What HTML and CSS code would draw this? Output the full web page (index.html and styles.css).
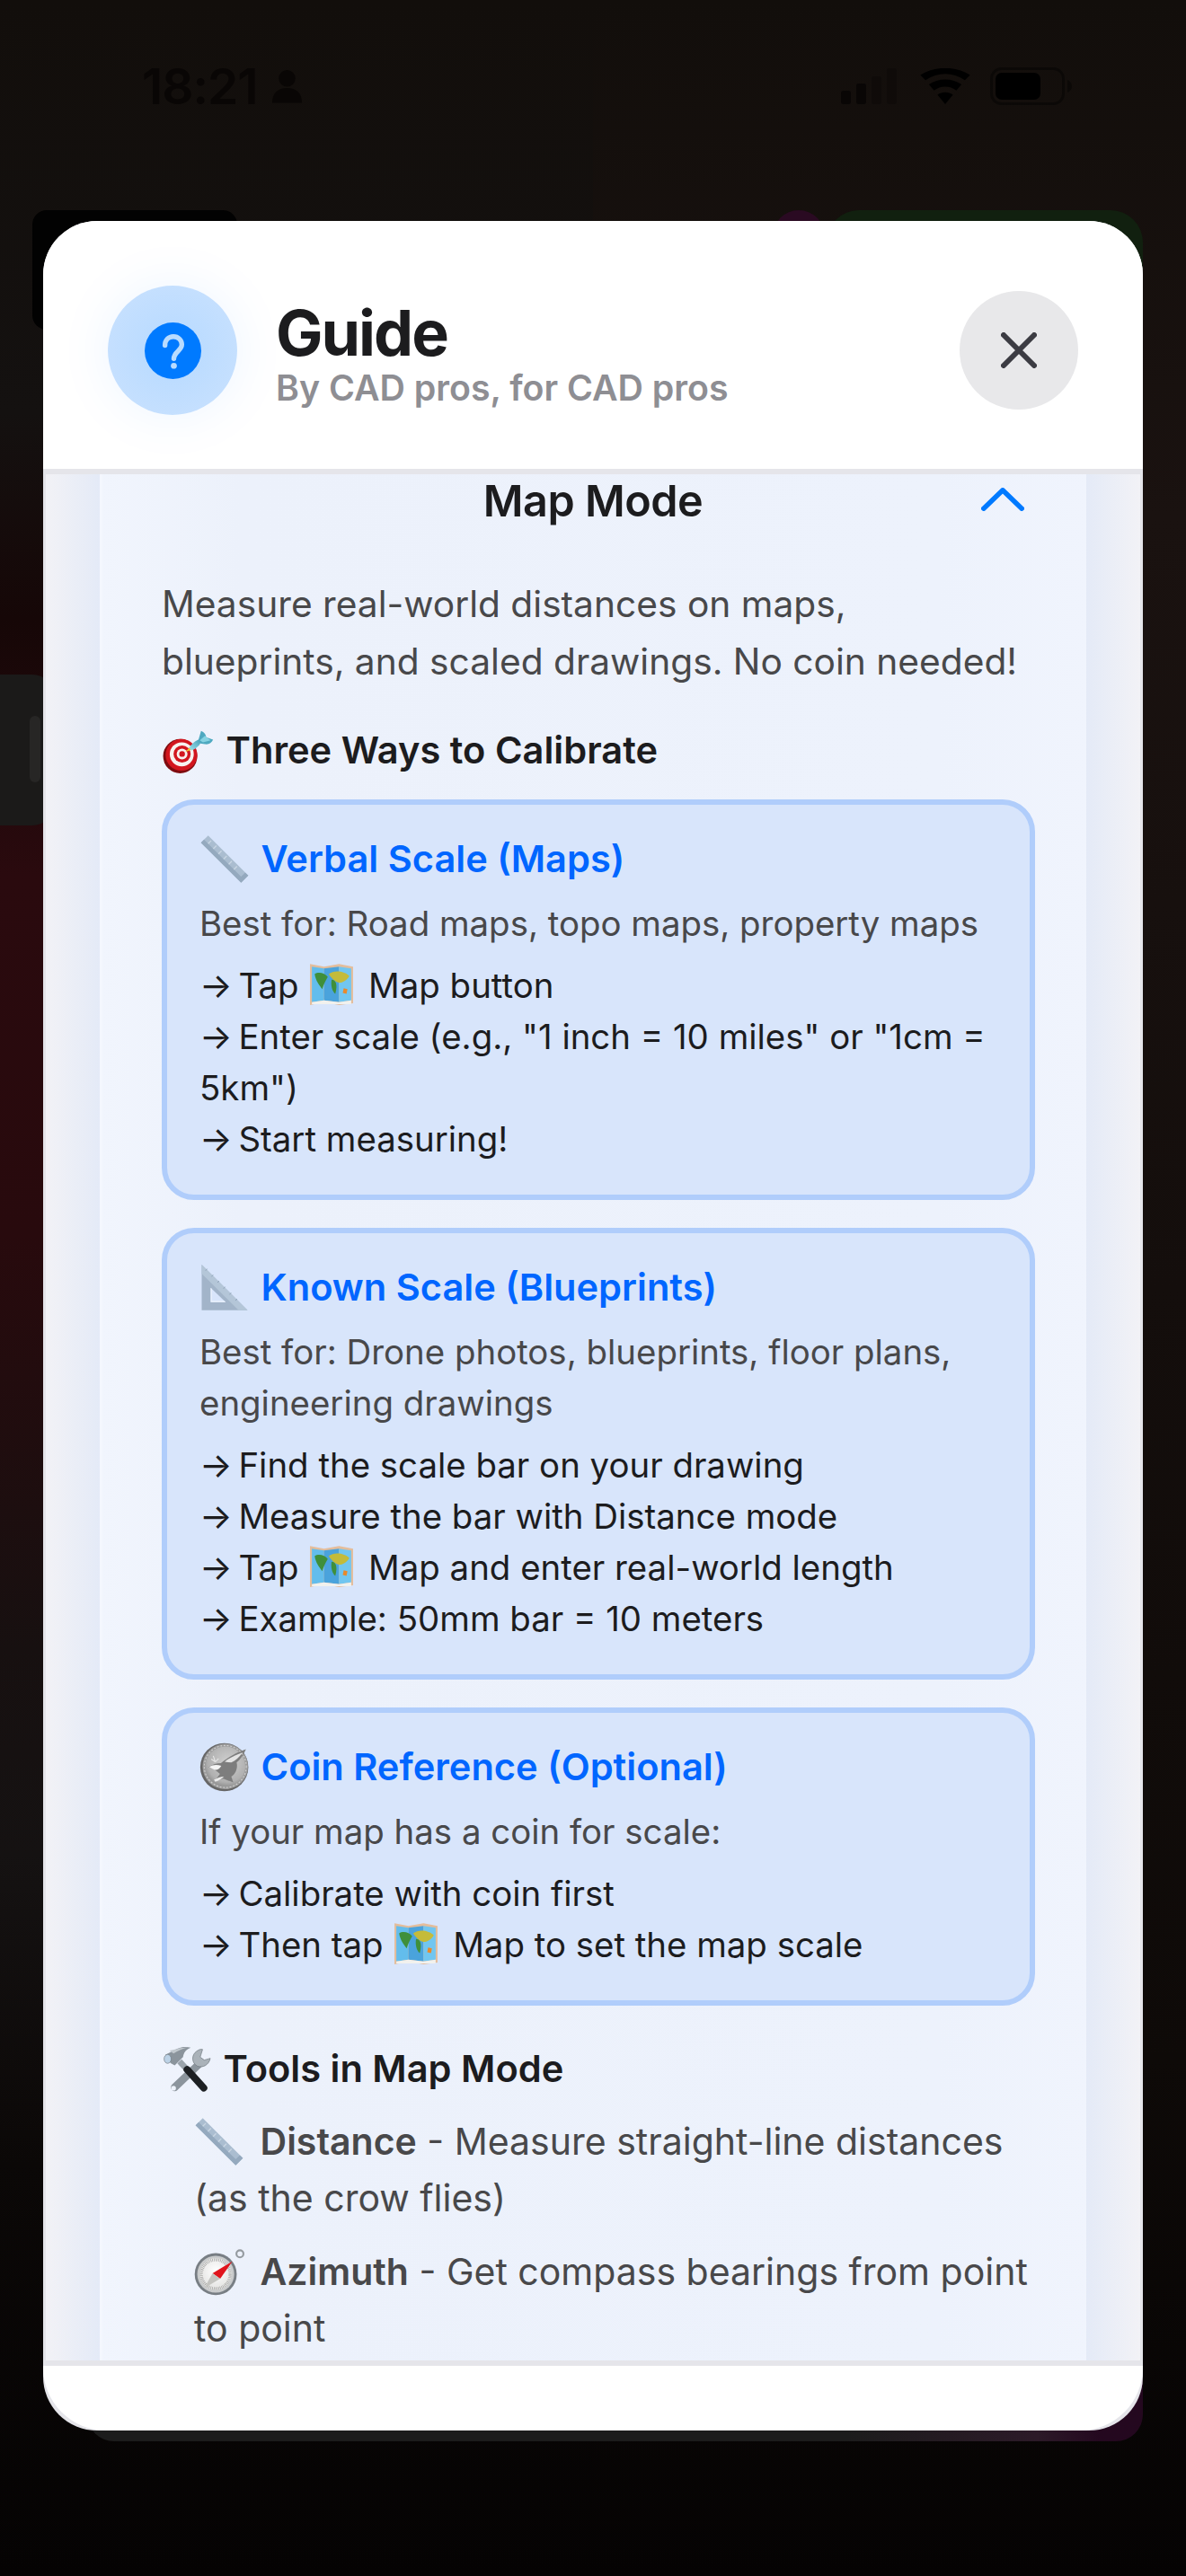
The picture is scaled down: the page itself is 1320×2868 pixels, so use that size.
FILE: index.html
```html
<!DOCTYPE html>
<html lang="en">
<head>
    <meta charset="UTF-8">
    <meta name="viewport" content="width=device-width, initial-scale=1.0">
    <title>Guide</title>
    <link rel="stylesheet" href="styles.css">
</head>
<body>
    <!-- Emoji drawn once, used below -->
    <svg class="defs" width="0" height="0" aria-hidden="true">
        <defs>
            <radialGradient id="coinFill" cx="55%" cy="40%" r="70%">
                <stop offset="0" stop-color="#d0d0d0"/>
                <stop offset="0.7" stop-color="#b0b0b0"/>
                <stop offset="1" stop-color="#7c7c7c"/>
            </radialGradient>
            <radialGradient id="compassFace" cx="50%" cy="40%" r="60%">
                <stop offset="0" stop-color="#ffffff"/>
                <stop offset="1" stop-color="#e2e2e0"/>
            </radialGradient>
            <linearGradient id="dartBody" x1="0" y1="1" x2="1" y2="0">
                <stop offset="0" stop-color="#9fe3ee"/>
                <stop offset="1" stop-color="#3f9cb4"/>
            </linearGradient>
            <symbol id="e-ruler" viewBox="0 0 48 48">
                <path d="M1 8 8 1 47 40 40 47Z" fill="#aabdd0"/>
                <path d="M1 8 40 47 47 40 44 37 40 41 4 5Z" fill="#94a9be"/>
                <path d="M11 6 8 9M16 11 13 14M21 16 18 19M26 21 23 24M31 26 28 29M36 31 33 34" stroke="#c9d6e2" stroke-width="1.2"/>
            </symbol>
            <symbol id="e-square" viewBox="36 14 165 165">
                <path d="M42 20 195 172H42Z" fill="#a2b4c9"/>
                <path d="M42 20 195 172H165L42 50Z" fill="#b4c6d8"/>
                <path d="M60 34 55 40M80 54 75 60M100 74 95 80M120 94 115 100M140 114 135 120M160 134 155 140" stroke="#8fa3b8" stroke-width="3"/>
                <path d="M72 97 122 145H72Z" fill="#d8e5fb"/>
                <path d="M72 97V145H122L118 141H76V101Z" fill="#eaf1fc"/>
            </symbol>
            <symbol id="e-map" viewBox="0 0 48 48">
                <path d="M1 3 16 6 32 3 47 6V45L32 47 16 44 1 47Z" fill="#e3bd9c"/>
                <path d="M3 6 16 8V42L3 44Z" fill="#63bdec"/>
                <path d="M16 8 32 6V44L16 42Z" fill="#4aa3dc"/>
                <path d="M32 6 45 8V42L32 44Z" fill="#71c6f0"/>
                <path d="M6 14C10 11 17 13 20 17 17 22 16 24 14 30 11 26 7 21 6 14Z" fill="#3f8f3a"/>
                <path d="M21 14C27 9 38 11 43 16 40 21 36 23 32 23 29 23 25 20 21 14Z" fill="#c4bb3a"/>
                <path d="M24 20C28 20 31 24 28 35 25 33 23 27 24 20Z" fill="#3f8f3a"/>
                <path d="M37 29 41 30 40 35 36 34Z" fill="#e88a2c"/>
                <path d="M3 44 16 42 32 44 45 42V46H3Z" fill="#f1f1ee"/>
            </symbol>
            <symbol id="e-coin" viewBox="52 38 148 148">
                <circle cx="125" cy="112" r="72" fill="#666"/>
                <circle cx="128" cy="110" r="68" fill="#9c9c9c"/>
                <circle cx="128" cy="110" r="60" fill="url(#coinFill)"/>
                <path d="M115 100C130 88 150 72 190 58 182 76 172 90 162 98 166 112 160 132 146 140L152 158 122 146 96 154 112 132C100 122 90 114 78 112 90 104 102 100 115 100Z" fill="#7d7d7d"/>
                <path d="M126 96C140 84 160 74 180 68 170 82 158 92 146 98Z" fill="#e4e4e4"/>
                <path d="M80 112C90 104 104 104 116 108 112 116 104 122 96 120Z" fill="#f4f4f4"/>
                <path d="M94 150C104 144 114 140 124 140 118 146 108 152 98 156Z" fill="#ececec"/>
                <path d="M92 78 98 96M98 96 86 88M98 96 108 86" stroke="#e6e6e6" stroke-width="3"/>
                <circle cx="128" cy="110" r="63" fill="none" stroke="#cfcfcf" stroke-width="3" stroke-dasharray="5 5"/>
            </symbol>
            <symbol id="e-dart" viewBox="36 44 164 142">
                <circle cx="94" cy="126" r="54" fill="#7e0c10"/>
                <circle cx="98" cy="122" r="50" fill="#d2161e"/>
                <circle cx="99" cy="120" r="38" fill="#f7f2ef"/>
                <circle cx="100" cy="119" r="27" fill="#d2161e"/>
                <circle cx="100" cy="119" r="17" fill="#f7f2ef"/>
                <circle cx="100" cy="119" r="9" fill="#d2161e"/>
                <path d="M110 113 124 98 130 106Z" fill="#f2c230"/>
                <path d="M122 100C132 84 150 72 160 72 164 84 148 102 130 108Z" fill="url(#dartBody)"/>
                <path d="M152 74 160 46C170 50 176 58 176 66L198 74C194 84 184 90 172 88L158 86Z" fill="#4ea9c0"/>
                <path d="M156 76 172 62 190 76 166 82Z" fill="#86d3e2"/>
            </symbol>
            <symbol id="e-tools" viewBox="18 30 170 160">
                <path d="M150 88 62 172" stroke="#8c959d" stroke-width="26" stroke-linecap="round"/>
                <path d="M136 50C118 62 118 90 138 100 156 108 178 96 182 74L162 80 148 70 156 44C148 42 142 46 136 50Z" fill="#aab2b9" stroke="#6d757c" stroke-width="2"/>
                <circle cx="58" cy="175" r="8" fill="#eef3fc"/>
                <path d="M78 84 104 112" stroke="#9aa3ab" stroke-width="20"/>
                <path d="M104 112 160 174" stroke="#1d2023" stroke-width="24" stroke-linecap="round"/>
                <path d="M30 62 70 42C86 34 102 34 116 38 100 44 92 54 90 70L62 98 48 90Z" fill="#8b949c"/>
                <path d="M44 48 74 42C84 38 94 38 104 38 88 42 74 48 58 58Z" fill="#c1c8ce"/>
                <ellipse cx="38" cy="76" rx="12" ry="15" fill="#bcd2e6" stroke="#6d757c" stroke-width="2"/>
            </symbol>
            <symbol id="e-compass" viewBox="28 28 158 146">
                <circle cx="172" cy="44" r="11" fill="none" stroke="#949a9f" stroke-width="6"/>
                <circle cx="96" cy="108" r="66" fill="#787e84"/>
                <circle cx="96" cy="108" r="58" fill="#c9cbcc"/>
                <circle cx="96" cy="108" r="50" fill="url(#compassFace)"/>
                <circle cx="96" cy="108" r="45" fill="none" stroke="#8e8e8e" stroke-width="9" stroke-dasharray="1.500 3.500"/>
                <path d="M148 68 86 105 110 122Z" fill="#e0141c"/>
                <path d="M60 152 86 105 110 122Z" fill="#c4c4c0"/>
            </symbol>
        </defs>
    </svg>

    <div class="screen">
        <!-- App behind the sheet -->
        <div class="back-black"></div>
        <div class="back-dot"></div>
        <div class="back-green"></div>
        <div class="back-bar"><span class="back-pill"></span></div>
        <div class="back-shelf"></div>

        <div class="statusbar">
            <div class="status-left">
                <span class="clock">18:21</span>
                <svg class="person" viewBox="0 0 36 38"><circle cx="18" cy="10" r="9.500"/><path d="M1 38C1 26 8 21 18 21S35 26 35 38Z"/></svg>
            </div>
            <div class="status-right">
                <svg class="signal" viewBox="0 0 64 40">
                    <rect x="0" y="25" width="11" height="15" rx="3"/>
                    <rect x="17" y="17" width="11" height="23" rx="3"/>
                    <rect x="34" y="9" width="11" height="31" rx="3" opacity="0.35"/>
                    <rect x="51" y="0" width="11" height="40" rx="3" opacity="0.35"/>
                </svg>
                <svg class="wifi" viewBox="0 0 58 42">
                    <path d="M29 42 20 31C25 27 33 27 38 31Z"/>
                    <path d="M16 26 10 19C20 11 38 11 48 19L42 26C35 20 23 20 16 26Z"/>
                    <path d="M6 14 0 8C16-3 42-3 58 8L52 14C38 4 20 4 6 14Z"/>
                </svg>
                <svg class="battery" viewBox="0 0 92 42">
                    <rect x="1.500" y="1.500" width="80" height="39" rx="11" fill="none" stroke="#000" stroke-opacity="0.4" stroke-width="3"/>
                    <rect x="6" y="6" width="50" height="30" rx="7"/>
                    <path d="M86 14C89 15 91 18 91 21S89 27 86 28Z" opacity="0.4"/>
                </svg>
            </div>
        </div>

        <div class="sheet">
            <div class="sheet-header">
                <div class="help-badge">
                    <div class="help-dot">
                        <svg viewBox="0 0 64 64" class="help-mark">
                            <path d="M23 26C23 20 27 16 32.500 16 38 16 42 20 42 25 42 32 33 33 33 41" fill="none" stroke="#b9dcff" stroke-width="5.500" stroke-linecap="round"/>
                            <circle cx="33" cy="49" r="3.400" fill="#b9dcff"/>
                        </svg>
                    </div>
                </div>
                <div class="header-text">
                    <h1>Guide</h1>
                    <p>By CAD pros, for CAD pros</p>
                </div>
                <button class="close-btn" aria-label="Close">
                    <svg viewBox="0 0 40 40"><path d="M3 3 37 37M37 3 3 37" fill="none" stroke="#3c3c43" stroke-width="6" stroke-linecap="round"/></svg>
                </button>
            </div>

            <div class="sheet-body">
                <div class="panel">
                    <div class="panel-head">
                        <h2>Map Mode</h2>
                        <svg class="chevron" viewBox="0 0 52 28"><path d="M3 25 26 3 49 25" fill="none" stroke="#007aff" stroke-width="6" stroke-linecap="round" stroke-linejoin="round"/></svg>
                    </div>

                    <p class="intro">Measure real-world distances on maps, blueprints, and scaled drawings. No coin needed!</p>

                    <h3><svg class="emoji dart"><use href="#e-dart"/></svg> Three Ways to Calibrate</h3>

                    <div class="way">
                        <h4><svg class="emoji"><use href="#e-ruler"/></svg> Verbal Scale (Maps)</h4>
                        <p class="best">Best for: Road maps, topo maps, property maps</p>
                        <p class="steps"><span class="arrow">→</span> Tap <svg class="emoji"><use href="#e-map"/></svg> Map button<br><span class="arrow">→</span> Enter scale (e.g., "1 inch = 10 miles" or "1cm = 5km")<br><span class="arrow">→</span> Start measuring!</p>
                    </div>

                    <div class="way">
                        <h4><svg class="emoji"><use href="#e-square"/></svg> Known Scale (Blueprints)</h4>
                        <p class="best">Best for: Drone photos, blueprints, floor plans, engineering drawings</p>
                        <p class="steps"><span class="arrow">→</span> Find the scale bar on your drawing<br><span class="arrow">→</span> Measure the bar with Distance mode<br><span class="arrow">→</span> Tap <svg class="emoji"><use href="#e-map"/></svg> Map and enter real-world length<br><span class="arrow">→</span> Example: 50mm bar = 10 meters</p>
                    </div>

                    <div class="way">
                        <h4><svg class="emoji"><use href="#e-coin"/></svg> Coin Reference (Optional)</h4>
                        <p class="best">If your map has a coin for scale:</p>
                        <p class="steps"><span class="arrow">→</span> Calibrate with coin first<br><span class="arrow">→</span> Then tap <svg class="emoji"><use href="#e-map"/></svg> Map to set the map scale</p>
                    </div>

                    <h3 class="tools-title"><svg class="emoji"><use href="#e-tools"/></svg> Tools in Map Mode</h3>
                    <div class="tool-list">
                        <p><svg class="emoji"><use href="#e-ruler"/></svg> <b>Distance</b> - Measure straight-line distances (as the crow flies)</p>
                        <p><svg class="emoji"><use href="#e-compass"/></svg> <b>Azimuth</b> - Get compass bearings from point to point</p>
                    </div>
                </div>
            </div>

            <div class="sheet-footer"></div>
        </div>
    </div>
</body>
</html>
```

FILE: styles.css
```css
html, body {
    margin: 0;
    padding: 0;
}
body {
    font-family: Inter, "Liberation Sans", sans-serif;
    color: #1c1c1e;
}
.defs {
    position: absolute;
}
.screen {
    position: relative;
    width: 1320px;
    height: 2868px;
    overflow: hidden;
    background:
        linear-gradient(180deg, #120e0b 0%, #141110 16%, #160707 24%, #2a0a0e 34%, #280a0d 48%, #171010 64%, #151212 72%, #0b0807 84%, #050303 100%) left / 660px 100% no-repeat,
        linear-gradient(180deg, #120e0b 0%, #1a1210 20%, #140e0c 50%, #0e0a08 80%, #050303 100%) right / 660px 100% no-repeat;
}

/* shapes of the dimmed app behind the sheet */
.back-black {
    position: absolute;
    left: 36px;
    top: 234px;
    width: 228px;
    height: 133px;
    background: #020202;
    border-radius: 16px;
}
.back-dot {
    position: absolute;
    left: 860px;
    top: 234px;
    width: 58px;
    height: 58px;
    background: #2a0a22;
    border-radius: 50%;
}
.back-green {
    position: absolute;
    left: 920px;
    top: 234px;
    width: 352px;
    height: 120px;
    background: #11200f;
    border-radius: 36px;
}
.back-bar {
    position: absolute;
    left: -40px;
    top: 751px;
    width: 100px;
    height: 168px;
    background: #1b1a19;
    border-radius: 24px;
}
.back-pill {
    position: absolute;
    left: 73px;
    top: 46px;
    width: 12px;
    height: 74px;
    background: #272625;
    border-radius: 6px;
}
.back-shelf {
    position: absolute;
    left: 97px;
    top: 2640px;
    width: 1175px;
    height: 78px;
    background: linear-gradient(90deg, #1c1c1c 0%, #1c1c1c 72%, #2c1a28 90%, #24081f 96%);
    border-radius: 0 0 30px 30px;
}

.statusbar {
    display: flex;
    justify-content: space-between;
    align-items: center;
    height: 40px;
    padding: 76px 126px 0 158px;
    color: #090605;
}
.status-left, .status-right {
    display: flex;
    align-items: center;
}
.clock {
    font-size: 55px;
    font-weight: 600;
    letter-spacing: -1px;
    line-height: 40px;
}
.person {
    width: 35px;
    height: 38px;
    margin-left: 15px;
    fill: #090605;
}
.signal {
    width: 64px;
    height: 40px;
    fill: #090605;
}
.wifi {
    width: 56px;
    height: 40px;
    margin-left: 24px;
    fill: #000;
}
.battery {
    width: 92px;
    height: 42px;
    margin-left: 22px;
    fill: #000;
}

.sheet {
    position: absolute;
    left: 48px;
    top: 246px;
    width: 1224px;
    height: 2460px;
    display: flex;
    flex-direction: column;
    background: #e5e5ea;
    border-radius: 60px;
    overflow: hidden;
}
.sheet-header {
    flex: none;
    height: 282px;
    display: flex;
    align-items: center;
    box-sizing: border-box;
    padding: 12px 72px 0 72px;
    border-bottom: 6px solid #e5e5ea;
    background: #fff;
}
.help-badge {
    width: 144px;
    height: 144px;
    border-radius: 50%;
    box-shadow: 0 0 60px rgba(0, 122, 255, 0.08);
    display: flex;
    align-items: center;
    justify-content: center;
    background: radial-gradient(circle, #bcdcff 30%, #cbe2fe 100%);
}
.help-dot {
    width: 63px;
    height: 63px;
    border-radius: 50%;
    background: #007aff;
}
.help-mark {
    display: block;
    width: 63px;
    height: 63px;
}
.header-text {
    flex: 1;
    margin-left: 43px;
    padding-top: 6px;
}
.header-text h1 {
    margin: 0;
    font-size: 70px;
    font-weight: 700;
    letter-spacing: -2px;
    line-height: 78px;
}
.header-text p {
    margin: 0;
    font-size: 39.3px;
    font-weight: 600;
    line-height: 44px;
    color: #8e8e93;
}
.close-btn {
    width: 132px;
    height: 132px;
    border: none;
    border-radius: 50%;
    background: #e8e8ea;
    padding: 46px;
}
.close-btn svg {
    display: block;
    width: 40px;
    height: 40px;
}

.sheet-body {
    flex: 1;
    min-height: 0;
    overflow: hidden;
    box-sizing: border-box;
    padding: 0 60px;
    border-left: 3px solid #e5e5ea;
    border-right: 3px solid #e5e5ea;
    background: linear-gradient(90deg, #f2f2f6 0%, #e4eaf7 5%, #e4eaf7 95%, #f2f2f6 100%);
}
.panel {
    height: 100%;
    box-sizing: border-box;
    padding: 0 57px 0 66px;
    background: linear-gradient(90deg, #f1f5fd 0%, #ecf1fb 14%, #edf2fc 85%, #f0f4fd 100%);
    border-left: 3px solid #f4f7fe;
}
.panel-head {
    position: relative;
    height: 60px;
    display: flex;
    align-items: center;
    justify-content: center;
    padding-right: 12px;
}
.panel-head h2 {
    margin: 0;
    font-size: 48.5px;
    font-weight: 600;
    letter-spacing: -0.5px;
    line-height: 60px;
}
.chevron {
    position: absolute;
    right: 12px;
    top: 15px;
    width: 48px;
    height: 26px;
}
.intro {
    margin: 53px 0 0;
    font-size: 40.7px;
    line-height: 64px;
    color: #48484a;
}
h3 {
    margin: 35px 0 0;
    font-size: 41.6px;
    font-weight: 600;
    line-height: 62px;
}
.emoji {
    display: inline-block;
    width: 56px;
    height: 55px;
    margin-right: 2px;
    vertical-align: -13px;
}
.emoji.dart {
    width: 58px;
    height: 50px;
    margin-right: 3px;
}
.way {
    margin: 24px 0 31px;
    padding: 32px 36px 33px;
    background: #d8e5fb;
    border: 6px solid #b0cdfb;
    border-radius: 36px;
}
.way h4 {
    margin: 0;
    font-size: 41.6px;
    font-weight: 600;
    line-height: 56px;
    color: #0066ff;
}
.best {
    margin: 16px 0 0;
    font-size: 38.4px;
    line-height: 57px;
    color: #48484a;
}
.steps {
    margin: 12px 0 0;
    font-size: 38.4px;
    line-height: 57px;
}
.arrow {
    letter-spacing: -4px;
}
.steps .emoji {
    width: 52px;
    height: 50px;
    margin-right: 4px;
    vertical-align: -9px;
}
.tools-title {
    margin-top: 39px;
}
.tool-list {
    padding-left: 36px;
}
.tool-list p {
    margin: 19px 0 0;
    font-size: 41px;
    line-height: 63px;
    color: #48484a;
}
.tool-list .emoji {
    margin-right: 6px;
}
.tool-list b {
    font-weight: 600;
}

.sheet-footer {
    flex: none;
    height: 78px;
    border-top: 6px solid #e5e5ea;
    box-sizing: border-box;
    background: #fff;
    border-radius: 0 0 70px 70px;
}
```
